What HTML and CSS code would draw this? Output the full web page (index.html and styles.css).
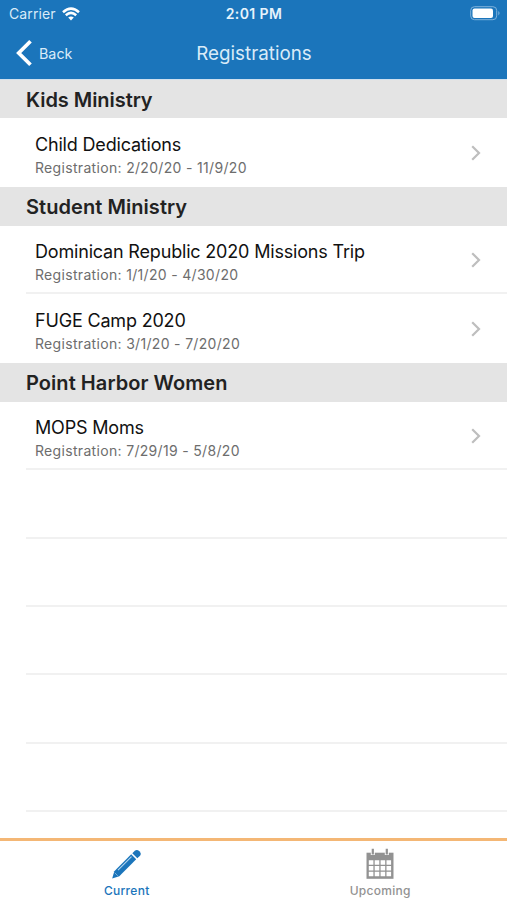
FILE: index.html
```html
<!DOCTYPE html>
<html lang="en">
<head>
<meta charset="utf-8">
<title>Registrations</title>
<link rel="stylesheet" href="styles.css">
</head>
<body>
<div class="app">
  <header class="header">
    <div class="status">
      <div class="carrier"><span>Carrier</span>
        <svg class="wifi" width="18" height="14" viewBox="0 0 18 14" fill="none" stroke="#fff" stroke-width="2.5"><path d="M1 5.2Q9-2 17 5.2M3.8 8.2Q9 3.6 14.2 8.2"/><path d="M6.2 10.6Q9 8.2 11.8 10.6L9 13.5Z" fill="#fff" stroke="none"/></svg>
      </div>
      <div class="time">2:01 PM</div>
      <svg class="battery" width="31" height="15" viewBox="0 0 31 15"><rect x=".7" y=".7" width="26" height="13" rx="3.8" fill="none" stroke="#7fb2dc"/><rect x="2.5" y="2.5" width="20.5" height="9.5" rx="2" fill="#fff"/><path d="M28.3 5Q30.8 7.2 28.3 9.5Z" fill="#7fb2dc"/></svg>
    </div>
    <nav class="nav">
      <div class="back">
        <svg width="18" height="28" viewBox="0 0 18 28" fill="none" stroke="#fff" stroke-width="3.7"><path d="M15.5 2.2L3.7 14L15.5 25.8"/></svg>
        <span>Back</span>
      </div>
      <h1 class="heading">Registrations</h1>
      <div></div>
    </nav>
  </header>
  <main class="list">
    <h2 class="section">Kids Ministry</h2>
    <div class="row last"><div><div class="title">Child Dedications</div><div class="dates">Registration: 2/20/20 - 11/9/20</div></div><svg class="chevron" viewBox="0 0 10 16"><path d="M1.2 1.2L8 8L1.2 14.8"/></svg></div>
    <h2 class="section wide">Student Ministry</h2>
    <div class="row"><div><div class="title">Dominican Republic 2020 Missions Trip</div><div class="dates">Registration: 1/1/20 - 4/30/20</div></div><svg class="chevron" viewBox="0 0 10 16"><path d="M1.2 1.2L8 8L1.2 14.8"/></svg></div>
    <div class="row last"><div><div class="title">FUGE Camp 2020</div><div class="dates">Registration: 3/1/20 - 7/20/20</div></div><svg class="chevron" viewBox="0 0 10 16"><path d="M1.2 1.2L8 8L1.2 14.8"/></svg></div>
    <h2 class="section wide">Point Harbor Women</h2>
    <div class="row"><div><div class="title">MOPS Moms</div><div class="dates">Registration: 7/29/19 - 5/8/20</div></div><svg class="chevron" viewBox="0 0 10 16"><path d="M1.2 1.2L8 8L1.2 14.8"/></svg></div>
    <div class="row"></div>
    <div class="row"></div>
    <div class="row"></div>
    <div class="row"></div>
    <div class="row"></div>
  </main>
  <footer class="tabs">
    <div class="tab active">
      <svg width="32" height="32" viewBox="0 0 32 32" fill="#1b75bb"><path d="M1.2 30.5L3.3 23.2L20.2 6.3L25.2 11.3L8.3 28.2Z"/><path d="M21.3 5.2L23.8 2.7Q26 1 28.4 3.2Q30.8 5.5 29 7.7L26.3 10.2Z"/><path d="M7 22.2L20.5 8.7" stroke="#b5d7f0" stroke-width="1.1"/><path d="M3.7 24.7L6.8 27.8" stroke="#8fbfe4" stroke-width=".8"/></svg>
      <span>Current</span>
    </div>
    <div class="tab">
      <svg width="32" height="32" viewBox="0 0 32 32"><path d="M2.5 4.7H29.5V30.8H2.5Z" fill="#929292"/><path d="M8.8 1.2V7M22.8 1.2V7" stroke="#fff" stroke-width="4"/><path d="M8.8 .7V6.5M22.8 .7V6.5" stroke="#929292" stroke-width="2.2"/><path d="M4.8 12.2h4.6v4.5H4.8zM10.7 12.2h4.6v4.5h-4.6zM16.6 12.2h4.6v4.5h-4.6zM22.5 12.2h4.6v4.5h-4.6zM4.8 18h4.6v4.5H4.8zM10.7 18h4.6v4.5h-4.6zM16.6 18h4.6v4.5h-4.6zM22.5 18h4.6v4.5h-4.6zM4.8 23.8h4.6v4.5H4.8zM10.7 23.8h4.6v4.5h-4.6zM16.6 23.8h4.6v4.5h-4.6zM22.5 23.8h4.6v4.5h-4.6z" fill="#fff"/></svg>
      <span>Upcoming</span>
    </div>
  </footer>
</div>
</body>
</html>
```
FILE: styles.css
```css
* { box-sizing: border-box; }
body { margin: 0; background: #fff; font-family: Inter, "Liberation Sans", sans-serif; }
.app { width: 507px; height: 900px; display: flex; flex-direction: column; overflow: hidden; }
.header { height: 79px; flex: none; background: #1b75bb; color: #fff; }
.status { height: 27px; display: grid; grid-template-columns: 1fr auto 1fr; align-items: center; padding: 0 6px 0 9px; }
.carrier { display: flex; align-items: center; gap: 6px; font-size: 14px; line-height: 20px; color: #d9ebf8; letter-spacing: .1px; }
.wifi { display: block; }
.time { margin-left: -2px; font-size: 14px; font-weight: 600; line-height: 20px; letter-spacing: .4px; color: #e6f3fc; }
.battery { justify-self: end; }
.nav { height: 52px; display: grid; grid-template-columns: 1fr auto 1fr; align-items: center; padding: 0 15px; }
.back { display: flex; align-items: center; gap: 6px; font-size: 14.3px; color: #d9ebf8; }
.heading { margin: 1px 0 0 1px; font-size: 18.8px; font-weight: 400; line-height: 24px; color: #d9ebf8; }
.list { flex: 1; min-height: 0; overflow: hidden; border-top: 1px solid #cfe0ee; }
.section { margin: 0; height: 39.1px; padding-left: 26px; background: #e4e4e4; color: #222; font-size: 20px; font-weight: 600; line-height: 40px; letter-spacing: -.05px; }
.section:first-child { height: 38.4px; }
.wide { letter-spacing: .06px; }
.row { height: 68.4px; margin-left: 26px; padding: 15.4px 26px 0 9px; border-bottom: 2px solid #f1f1f1; display: flex; justify-content: space-between; }
.last { border-bottom: 0; }
.title { font-size: 18px; line-height: 22px; letter-spacing: -.18px; color: #111; white-space: nowrap; }
.dates { margin-top: 3px; font-size: 14px; line-height: 18px; letter-spacing: .32px; color: #6d6d6d; white-space: nowrap; }
.chevron { width: 10px; height: 16px; margin-top: 11px; fill: none; stroke: #bebebe; stroke-width: 2.2; }
.tabs { flex: none; height: 62px; border-top: 3px solid #f4b775; display: flex; }
.tab { flex: 1; display: flex; flex-direction: column; align-items: center; padding-top: 7px; font-size: 12px; font-weight: 500; line-height: 16px; color: #929292; }
.tab span { margin-top: 3px; letter-spacing: .3px; }
.active { color: #1b75bb; }
```
